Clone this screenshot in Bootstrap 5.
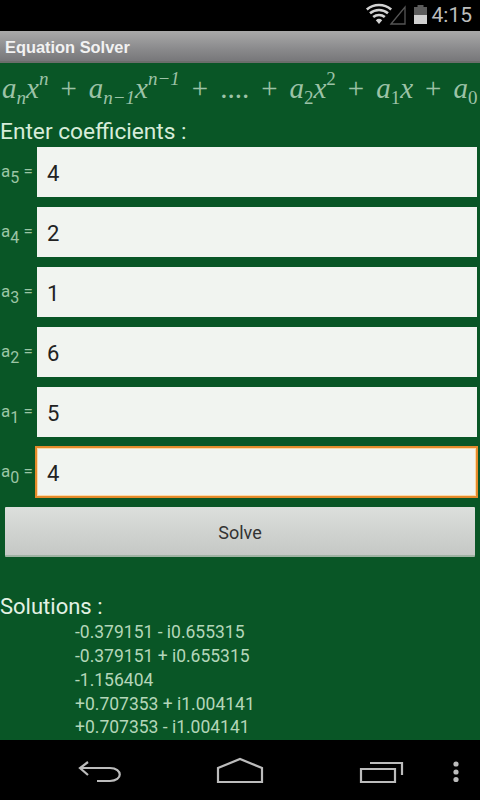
<!DOCTYPE html>
<html lang="en">
<head>
<meta charset="utf-8">
<title>Equation Solver</title>
<link href="https://cdn.jsdelivr.net/npm/bootstrap@5.3.0/dist/css/bootstrap.min.css" rel="stylesheet">
<style>
html,body{width:480px;height:800px;overflow:hidden;background:#000;}
body{font-family:Roboto,"Liberation Sans",sans-serif;}
.shell{width:480px;height:800px;}
.statusbar{height:31px;background:#000;color:#bdbdbd;font-size:21px;line-height:31px;padding-right:8px;}
.statusbar svg{display:block;}
.titlebar{height:32px;background:linear-gradient(#a9a9a9,#8a8a8c 60%,#77777a);border-bottom:2px solid #6b6e6b;color:#f2f2f2;font-family:"Liberation Sans",Roboto,sans-serif;font-weight:700;font-size:16.4px;padding-left:5px;padding-top:3px;}
.appbody{background:#095626;overflow:hidden;min-height:0;}
.formula{height:52px;font-family:"Liberation Serif",serif;font-style:italic;font-size:29px;color:#9cc2a6;white-space:nowrap;padding-left:2px;padding-top:1px;}
.formula sup{font-size:19px;top:-.7em;}
.formula sub{font-size:19px;bottom:-.3em;}
.formula .oper{font-style:normal;margin:0 12px;}
.formula .nm{font-style:normal;}
.enterhead{height:33px;font-size:22.7px;line-height:35px;color:#d7ecd9;}
.coefrow{height:50px;margin-bottom:10px;}
.coeflabel{width:37px;flex:none;font-size:17px;color:#9cc5a5;white-space:nowrap;line-height:1;padding-top:4px;padding-left:1px;}
.coeflabel .subnum{font-size:16px;vertical-align:-6px;line-height:1;}
.coefinput.form-control{width:440px;height:50px;flex:none;border:0;border-radius:0;background:#f1f4f0;font-size:22px;color:#222;padding:2px 10px 0;box-shadow:none;}
.coefinput.form-control:focus{background:#f1f4f0;}
.coefinput.form-control.activebox{margin-left:-2px;width:443px;height:52px;margin-top:-1px;margin-bottom:-1px;border:2px solid #e58a2a;box-shadow:inset 0 0 0 1px #fbd9a8;padding-left:10px;}
.solvebtn.btn{width:470px;height:50px;margin-left:5px;border:0;border-radius:1px;background:linear-gradient(#dcdfdc,#c5c8c5);border-bottom:2px solid #9fb3a3;color:#333;font-size:18px;padding:2px 0 0;}
.solhead{font-size:22px;color:#e3f1e4;line-height:28px;margin-top:36px;}
.sollist{margin-left:75px;font-size:17.500px;color:#b4d6b9;line-height:23.750px;white-space:nowrap;}
.navbottom{height:60px;background:#000;flex:none;}
.navbottom svg{display:block;}
</style>
</head>
<body>
<div class="shell d-flex flex-column">
  <div class="statusbar d-flex align-items-center justify-content-end gap-1 flex-none">
    <svg width="66" height="31" viewBox="0 0 66 31">
      <g fill="none" stroke="#d2d2d2" stroke-width="2.600">
        <path d="M4.800 9.400A19 19 0 0 1 29.200 9.400"/>
        <path d="M8 13.300A14 14 0 0 1 26 13.300"/>
        <path d="M11.200 17.100A9 9 0 0 1 22.800 17.100"/>
      </g>
      <path d="M13.800 20.200A5 5 0 0 1 20.200 20.200L17 24z" fill="#d2d2d2"/>
      <path d="M29 24 43 7v17z" fill="none" stroke="#555" stroke-width="1.300"/>
      <rect x="52" y="7" width="13" height="8" fill="#5c5c5c"/>
      <rect x="55.500" y="5" width="6" height="2" fill="#5c5c5c"/>
      <rect x="52" y="15" width="13" height="9" fill="#d0d0d0"/>
    </svg>
    <span>4:15</span>
  </div>
  <div class="titlebar d-flex align-items-center flex-none">Equation Solver</div>
  <main class="appbody flex-grow-1 d-flex flex-column">
    <div class="formula d-flex align-items-center"><span>a<sub>n</sub>x<sup>n</sup><span class="oper">+</span>a<sub>n−1</sub>x<sup>n−1</sup><span class="oper">+</span><span class="nm">....</span><span class="oper">+</span>a<sub class="nm">2</sub>x<sup class="nm">2</sup><span class="oper">+</span>a<sub class="nm">1</sub>x<span class="oper">+</span>a<sub class="nm">0</sub></span></div>
    <div class="enterhead">Enter coefficients :</div>
    <form>
      <div class="coefrow d-flex align-items-center"><label class="coeflabel">a<span class="subnum">5</span> =</label><input class="coefinput form-control" value="4"></div>
      <div class="coefrow d-flex align-items-center"><label class="coeflabel">a<span class="subnum">4</span> =</label><input class="coefinput form-control" value="2"></div>
      <div class="coefrow d-flex align-items-center"><label class="coeflabel">a<span class="subnum">3</span> =</label><input class="coefinput form-control" value="1"></div>
      <div class="coefrow d-flex align-items-center"><label class="coeflabel">a<span class="subnum">2</span> =</label><input class="coefinput form-control" value="6"></div>
      <div class="coefrow d-flex align-items-center"><label class="coeflabel">a<span class="subnum">1</span> =</label><input class="coefinput form-control" value="5"></div>
      <div class="coefrow d-flex align-items-center"><label class="coeflabel">a<span class="subnum">0</span> =</label><input class="coefinput form-control activebox" value="4"></div>
      <button type="button" class="solvebtn btn d-block">Solve</button>
    </form>
    <div class="solhead">Solutions :</div>
    <div class="sollist">
      <div>-0.379151 - i0.655315</div>
      <div>-0.379151 + i0.655315</div>
      <div>-1.156404</div>
      <div>+0.707353 + i1.004141</div>
      <div>+0.707353 - i1.004141</div>
    </div>
  </main>
  <nav class="navbottom">
    <svg width="480" height="60" viewBox="0 0 480 60">
      <g fill="none" stroke="#bcbcbc" stroke-width="2.200">
        <path d="M80 28h30c13 0 13 13 0 13H97"/>
        <path d="M88 22 80 28 88 35"/>
        <path d="M218 42V28l22-9 22 9v14z"/>
        <path d="M361 29h34v13h-34z"/>
        <path d="M370 23h32v12"/>
      </g>
      <g fill="#bcbcbc"><circle cx="456" cy="24" r="2.600"/><circle cx="456" cy="32" r="2.600"/><circle cx="456" cy="39.500" r="2.600"/></g>
    </svg>
  </nav>
</div>
<script src="https://cdn.jsdelivr.net/npm/bootstrap@5.3.0/dist/js/bootstrap.bundle.min.js"></script>
</body>
</html>
